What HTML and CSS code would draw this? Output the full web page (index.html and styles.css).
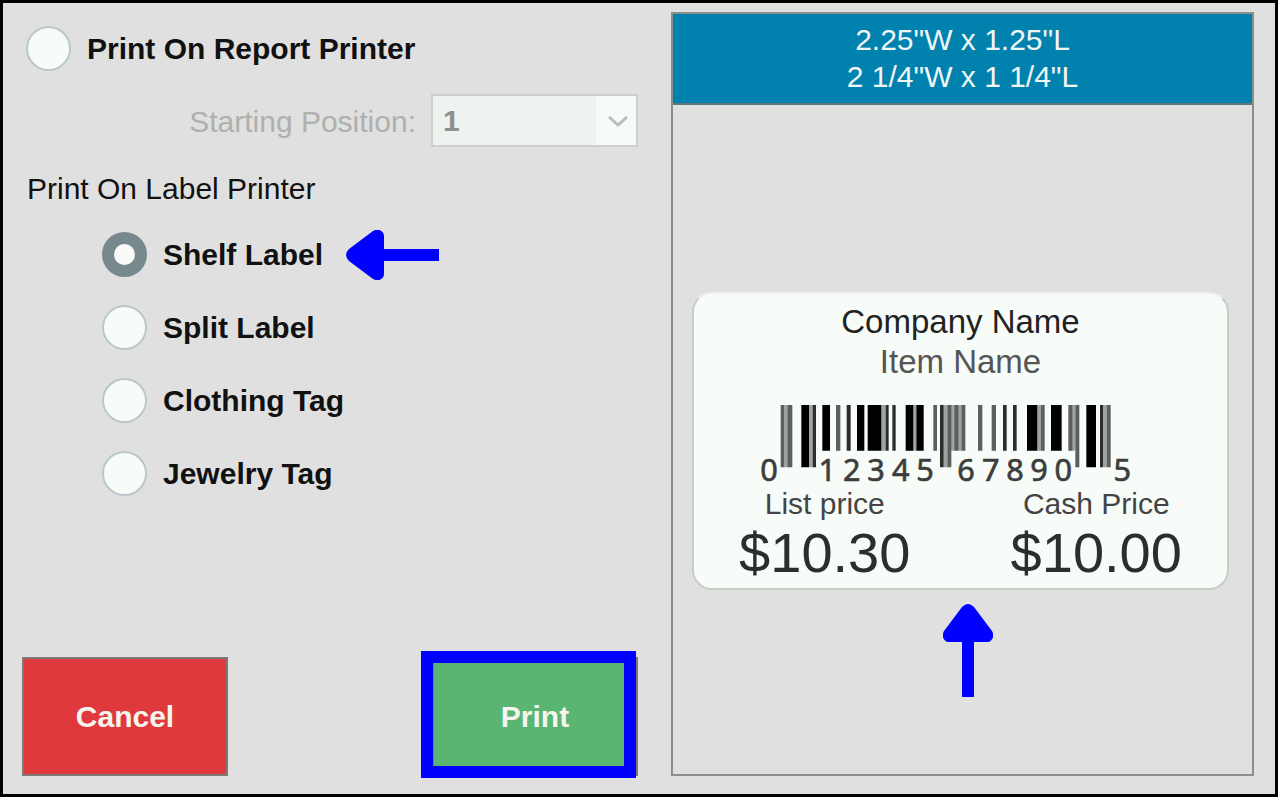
FILE: index.html
```html
<!DOCTYPE html>
<html lang="en">
<head>
<meta charset="utf-8">
<title>Print Labels</title>
<link rel="stylesheet" href="styles.css">
</head>
<body>
<main class="dialog">
  <form class="options">
    <div class="choice">
      <input class="radio" type="radio" name="target" id="report">
      <label for="report">Print On Report Printer</label>
    </div>
    <div class="position">
      <label class="position-label" for="start">Starting Position:</label>
      <div class="select-wrap">
        <select class="select" id="start" disabled><option>1</option></select>
        <svg class="chevron" viewBox="0 0 20 12" aria-hidden="true"><path d="M1 2 L10 10 L19 2"/></svg>
      </div>
    </div>
    <div class="heading">Print On Label Printer</div>
    <div class="label-choices">
      <div class="choice">
        <input class="radio" type="radio" name="target" id="shelf" checked>
        <label for="shelf">Shelf Label</label>
        <svg class="arrow-left" viewBox="0 0 93 50" aria-hidden="true"><path d="M93 19 H38 V6 C38 1 32 -2 27 1 L3 19 Q-3 25 3 31 L27 49 C32 52 38 49 38 44 V31 H93 Z"/></svg>
      </div>
      <div class="choice">
        <input class="radio" type="radio" name="target" id="split">
        <label for="split">Split Label</label>
      </div>
      <div class="choice">
        <input class="radio" type="radio" name="target" id="clothing">
        <label for="clothing">Clothing Tag</label>
      </div>
      <div class="choice">
        <input class="radio" type="radio" name="target" id="jewelry">
        <label for="jewelry">Jewelry Tag</label>
      </div>
    </div>
    <div class="actions">
      <button class="button cancel" type="button">Cancel</button>
      <div class="print-wrap">
        <button class="button print" type="button">Print</button>
        <span class="highlight"></span>
      </div>
    </div>
  </form>

  <section class="preview">
    <header class="size">
      <div>2.25"W x 1.25"L</div>
      <div>2 1/4"W x 1 1/4"L</div>
    </header>
    <div class="stage">
      <article class="tag">
        <div class="company">Company Name</div>
        <div class="item">Item Name</div>
        <svg class="barcode" viewBox="60 42 1116 270" role="img" aria-label="Barcode 0 12345 67890 5">
          <path fill="#a0a4a0" d="M133 45h9v187h-9z M207 45h11v187h-11z M424 45h13v137h-13z M520 45h9v137h-9z M611 45h11v187h-11z M633 45h11v137h-11z M656 45h8v137h-8z M892 45h10v137h-10z M996 45h10v137h-10z M1089 45h11v187h-11z"/>
          <path fill="#5c5f5c" d="M122 45h11v187h-11z M142 45h15v187h-15z M288 45h13v137h-13z M580 45h11v137h-11z M622 45h12v187h-12z M643 45h13v137h-13z M664 45h12v137h-12z M714 45h13v137h-13z M755 45h13v137h-13z M902 45h12v137h-12z M985 45h12v137h-12z M1006 45h12v187h-12z M1100 45h12v187h-12z"/>
          <path fill="#2c2e2c" d="M218 45h10v187h-10z M320 45h12v137h-12z M437 45h9v137h-9z M457 45h10v137h-10z M600 45h11v187h-11z M789 45h11v137h-11z M819 45h11v137h-11z M1080 45h9v187h-9z"/>
          <path fill="#000" d="M184 45h23v187h-23z M247 45h23v137h-23z M351 45h22v137h-22z M383 45h41v137h-41z M497 45h23v137h-23z M529 45h22v137h-22z M861 45h31v137h-31z M933 45h32v137h-32z M1039 45h29v187h-29z"/>
          <g class="digits">
            <text x="87" y="273">0</text>
            <text x="262" y="273">1</text>
            <text x="335" y="273">2</text>
            <text x="408" y="273">3</text>
            <text x="482" y="273">4</text>
            <text x="555" y="273">5</text>
            <text x="678" y="273">6</text>
            <text x="752" y="273">7</text>
            <text x="825" y="273">8</text>
            <text x="897" y="273">9</text>
            <text x="970" y="273">0</text>
            <text x="1147" y="273">5</text>
          </g>
        </svg>
        <div class="prices">
          <div>
            <div class="price-name">List price</div>
            <div class="price">$10.30</div>
          </div>
          <div>
            <div class="price-name">Cash Price</div>
            <div class="price">$10.00</div>
          </div>
        </div>
      </article>
      <svg class="arrow-up" viewBox="0 0 50 93" aria-hidden="true"><path d="M19 93 V38 H6 C1 38 -2 32 1 27 L19 3 Q25 -3 31 3 L49 27 C52 32 49 38 44 38 H31 V93 Z"/></svg>
    </div>
  </section>
</main>
</body>
</html>
```
FILE: styles.css
```css
* {
  box-sizing: border-box;
}

body {
  margin: 0;
  background: #e0e0e0;
  color: #111;
  font-family: "Liberation Sans", Arial, sans-serif;
  font-size: 30px;
  line-height: 36px;
}

.dialog {
  display: grid;
  grid-template-columns: 616fr 583fr;
  column-gap: 33px;
  min-height: 100vh;
  padding: 9px 21px 18px 19px;
  border: 3px solid #000;
}

.options {
  display: flex;
  flex-direction: column;
  padding-top: 14px;
}

.choice {
  display: flex;
  align-items: center;
  gap: 16px;
  padding-left: 4px;
  font-weight: bold;
}

.radio {
  appearance: none;
  flex: none;
  width: 45px;
  height: 45px;
  margin: 0;
  border: 2px solid #bbc7cd;
  border-radius: 50%;
  background: #f7fcf8;
}

.radio:checked {
  border: 12px solid #78898e;
  background: #fafafa;
}

.position {
  display: flex;
  justify-content: flex-end;
  align-items: center;
  gap: 15px;
  margin-top: 23px;
}

.position-label {
  padding-top: 3px;
  color: #adb0ad;
}

.select-wrap {
  position: relative;
}

.select {
  appearance: none;
  display: block;
  width: 207px;
  height: 53px;
  padding: 0 10px;
  border: 2px solid #cdcfcd;
  border-radius: 0;
  background: linear-gradient(to right, #eff3ef 163px, #f6fbf7 163px);
  color: #8e908e;
  font: bold 30px "Liberation Sans", Arial, sans-serif;
  opacity: 1;
}

.chevron {
  position: absolute;
  top: 21px;
  right: 10px;
  width: 20px;
  height: 12px;
  fill: none;
  stroke: #babeba;
  stroke-width: 3;
}

.heading {
  margin-top: 24px;
  padding-left: 5px;
}

.label-choices {
  display: flex;
  flex-direction: column;
  gap: 28px;
  margin-top: 25px;
  padding-left: 76px;
}

.arrow-left {
  width: 93px;
  height: 50px;
  margin: -4px 0 -4px 7px;
  fill: #00f;
}

.actions {
  display: flex;
  justify-content: space-between;
  margin-top: auto;
}

.button {
  display: block;
  width: 206px;
  height: 119px;
  padding: 0;
  border: 2px solid #7b7875;
  color: #f5f5ee;
  font: bold 30px "Liberation Sans", Arial, sans-serif;
}

.cancel {
  background: #df393e;
}

.print {
  background: #5ab572;
}

.print-wrap {
  position: relative;
}

.highlight {
  position: absolute;
  inset: -6px 2px -2px -11px;
  border: 12px solid #00f;
  pointer-events: none;
}

.preview {
  display: flex;
  flex-direction: column;
  border: 2px solid #8c8e8e;
}

.size {
  padding: 7px 0 8px;
  border-bottom: 2px solid #62767e;
  background: #0081ae;
  color: #f0f5f5;
  line-height: 37px;
  text-align: center;
}

.stage {
  display: grid;
  flex: 1;
  grid-template-rows: 1fr auto 1fr;
  padding: 2px 23px 0 19px;
}

.tag {
  grid-row: 2;
  padding: 8px 0 4px;
  border: 2px solid #c8cec6;
  border-top-color: #eef2ee;
  border-radius: 20px;
  background: #f7fcf8;
  color: #2c2e2c;
  text-align: center;
}

.company {
  color: #222;
  font-size: 33px;
  line-height: 40px;
}

.item {
  color: #555;
  font-size: 33px;
  line-height: 40px;
}

.barcode {
  display: block;
  width: 372px;
  height: 90px;
  margin: 22px auto -8px 66px;
}

.digits {
  fill: #3c3e3c;
  stroke: #3c3e3c;
  stroke-width: 2;
  font-family: "Noto Sans", sans-serif;
  font-size: 92px;
  text-anchor: middle;
}

.prices {
  display: grid;
  grid-template-columns: 1fr 1fr;
  column-gap: 10px;
}

.price-name {
  color: #444;
}

.price {
  font-size: 56px;
  line-height: 62px;
}

.arrow-up {
  grid-row: 3;
  justify-self: center;
  width: 50px;
  height: 93px;
  margin: 14px 0 0 14px;
  fill: #00f;
}
```
